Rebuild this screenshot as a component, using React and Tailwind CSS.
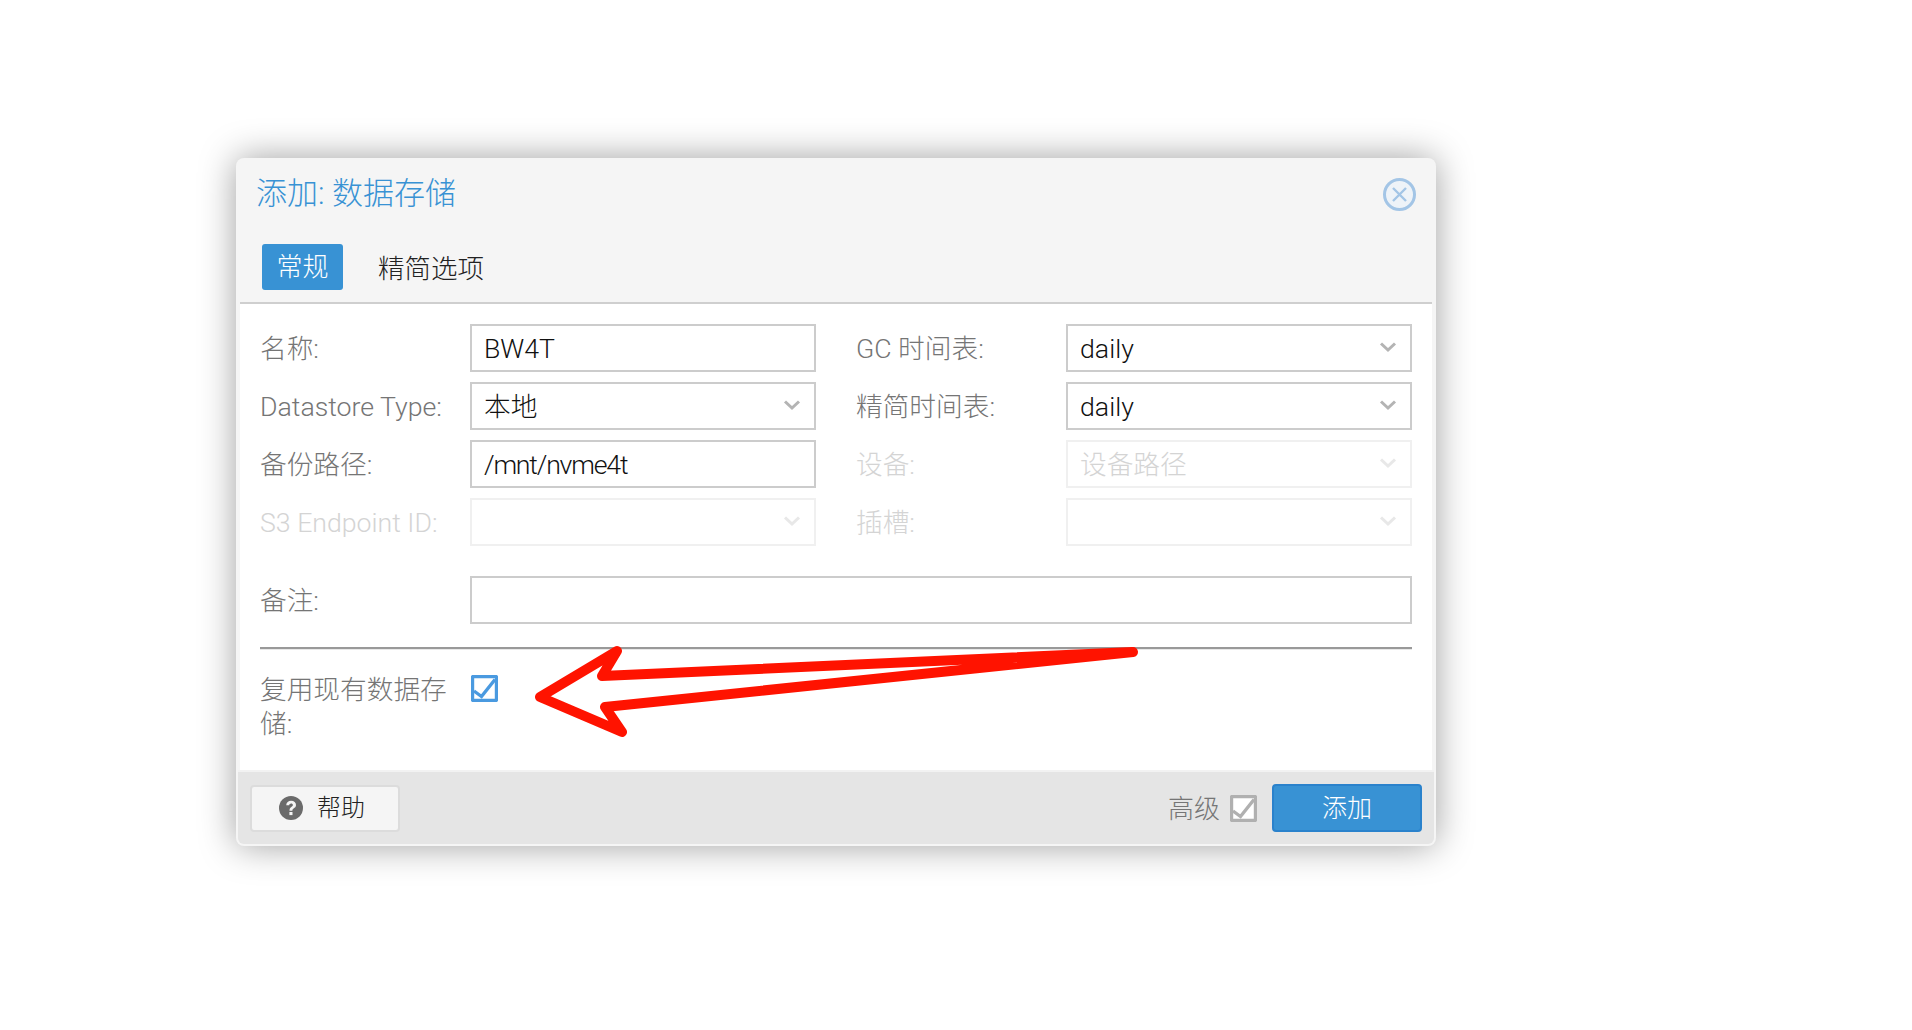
import React from "react";

const FONT = "[font-family:'Roboto','Noto_Sans_CJK_SC',sans-serif]";

function Chevron({ faded }) {
  return (
    <svg width="18" height="12" viewBox="0 0 18 12" className={faded ? "opacity-30" : ""}>
      <path d="M2 2.5 L9 9 L16 2.5" fill="none" stroke="#b4b4b4" strokeWidth="3" />
    </svg>
  );
}

function Label({ children, disabled }) {
  return (
    <div className={`w-[210px] shrink-0 pt-[2px] text-[26.7px] font-light ${disabled ? "text-[#d4d4d4]" : "text-[#757575]"}`}>
      {children}
    </div>
  );
}

function TextInput({ value, tight }) {
  return (
    <div className={`flex h-[48px] flex-1 items-center border-2 border-[#cccccc] bg-white pl-[12px] pt-[2px] text-[26.7px] font-light text-[#111111] ${tight ? "tracking-[-1.2px]" : ""}`}>
      {value}
    </div>
  );
}

function Select({ value, disabled, placeholder }) {
  return (
    <div className={`flex h-[48px] flex-1 items-center justify-between border-2 bg-white pl-[12px] pr-[13px] text-[26.7px] font-light ${disabled ? "border-[#f0f0f0] text-[#d4d4d4]" : "border-[#cccccc] text-[#111111]"}`}>
      <span className="pt-[2px]">{value || placeholder}</span>
      <span className="mb-[3px] flex"><Chevron faded={disabled} /></span>
    </div>
  );
}

function Field({ label, disabled, children }) {
  return (
    <div className="flex h-[48px] items-center">
      <Label disabled={disabled}>{label}</Label>
      {children}
    </div>
  );
}

function Check({ color, bg }) {
  return (
    <svg width="27" height="27" viewBox="0 0 27 27" className="block">
      <rect x="1.5" y="1.5" width="24" height="24" rx="1" fill={bg} stroke={color} strokeWidth="3.4" />
      <path d="M3 16 L10.5 21.5 L24 4.5" fill="none" stroke={color} strokeWidth="3.4" />
    </svg>
  );
}

export default function App() {
  return (
    <div className={`relative h-[1030px] w-[1912px] overflow-hidden bg-white pl-[236px] pt-[158px] ${FONT}`}>
      <div className="flex h-[688px] w-[1200px] flex-col rounded-[8px] bg-[#f5f5f5] shadow-[0_0_36px_rgba(0,0,0,0.38)]">
        {/* Title bar */}
        <div className="flex h-[72px] items-center justify-between pl-[20px] pr-[20px]">
          <div className="pt-[1px] text-[31px] font-light text-[#3892d4]">添加: 数据存储</div>
          <svg width="33" height="33" viewBox="0 0 33 33">
            <circle cx="16.5" cy="16.5" r="15" fill="#eef3f8" stroke="#a3c5e6" strokeWidth="3" />
            <path d="M10 10 L23 23 M23 10 L10 23" stroke="#a3c5e6" strokeWidth="2.4" />
          </svg>
        </div>

        {/* Tabs */}
        <div className="mx-[4px] flex h-[74px] items-start border-b-2 border-[#cfcfcf] pl-[22px] pt-[14px] text-[26px] font-light">
          <div className="flex h-[46px] w-[81px] items-center justify-center rounded-[3px] bg-[#3892d4] pt-px text-white">常规</div>
          <div className="flex h-[46px] items-center pl-[35px] pt-[3px] text-[26.5px] text-[#222222]">精简选项</div>
        </div>

        {/* Body */}
        <div className="mx-[4px] flex flex-1 flex-col bg-white px-[20px] pt-[20px]">
          <div className="grid grid-cols-[556px_556px] gap-x-[40px] gap-y-[10px]">
            <Field label="名称:"><TextInput value="BW4T" /></Field>
            <Field label="GC 时间表:"><Select value="daily" /></Field>
            <Field label="Datastore Type:"><Select value="本地" /></Field>
            <Field label="精简时间表:"><Select value="daily" /></Field>
            <Field label="备份路径:"><TextInput value="/mnt/nvme4t" tight /></Field>
            <Field label="设备:" disabled><Select disabled placeholder="设备路径" /></Field>
            <Field label="S3 Endpoint ID:" disabled><Select disabled /></Field>
            <Field label="插槽:" disabled><Select disabled /></Field>
          </div>

          <div className="mt-[30px]">
            <Field label="备注:"><div className="h-[48px] flex-1 border-2 border-[#cccccc] bg-white" /></Field>
          </div>

          <div className="mt-[23px] h-[3px] border-t-2 border-[#999999] bg-[#e8e8e8]" />

          <div className="mt-[26px] flex items-start">
            <div className="w-[210px] shrink-0 text-[26.7px] font-light leading-[34px] text-[#757575]">
              <div className="-mt-[3px] w-[190px]">复用现有数据存储:</div>
            </div>
            <div className="-mt-[1px] ml-[1px]"><Check color="#4a9ae0" bg="#ffffff" /></div>
          </div>
        </div>

        {/* Footer */}
        <div className="mx-[2px] mb-[2px] flex h-[74px] items-center justify-between rounded-b-[6px] border-t-2 border-[#f2f2f2] bg-[#e5e5e5] pl-[12px] pr-[12px]">
          <div className="flex h-[47px] w-[150px] items-center gap-[14px] rounded-[4px] border-2 border-[#dcdcdc] bg-[#f5f5f5] pl-[27px] text-[24px] font-light text-[#222222]">
            <svg width="24" height="24" viewBox="0 0 24 24" className="shrink-0">
              <circle cx="12" cy="12" r="12" fill="#6b6b6b" />
              <path d="M7.2 9.2 C7.4 6.4 9.4 4.8 12.1 4.8 C15 4.8 17 6.6 17 8.9 C17 10.7 15.9 11.6 14.6 12.4 C13.6 13.1 13.4 13.6 13.4 14.8 L10.5 14.8 C10.5 12.9 10.9 11.9 12.3 11 C13.3 10.3 13.9 9.8 13.9 9 C13.9 8.1 13.2 7.5 12.1 7.5 C11 7.5 10.3 8.2 10.2 9.3 Z" fill="#f5f5f5" />
              <rect x="10.4" y="16" width="3.1" height="3.1" fill="#f5f5f5" />
            </svg>
            <span>帮助</span>
          </div>
          <div className="flex items-center">
            <span className="pt-[2px] text-[26px] font-light text-[#757575]">高级</span>
            <span className="ml-[10px]"><Check color="#b0b0b0" bg="#ffffff" /></span>
            <div className="ml-[15px] flex h-[48px] w-[150px] items-center justify-center rounded-[4px] border-2 border-[#2a82cc] bg-[#3892d4] pt-px text-[25px] font-light text-white">添加</div>
          </div>
        </div>
      </div>

      {/* Annotation arrow drawn over the dialog */}
      <svg className="absolute left-0 top-0" width="1912" height="1030" viewBox="0 0 1912 1030">
        <path
          d="M1133 652 L602 676 L617 651 L540 697 L622 732 L605 707 Z"
          fill="none"
          stroke="#ff1300"
          strokeWidth="10"
          strokeLinejoin="round"
        />
      </svg>
    </div>
  );
}
